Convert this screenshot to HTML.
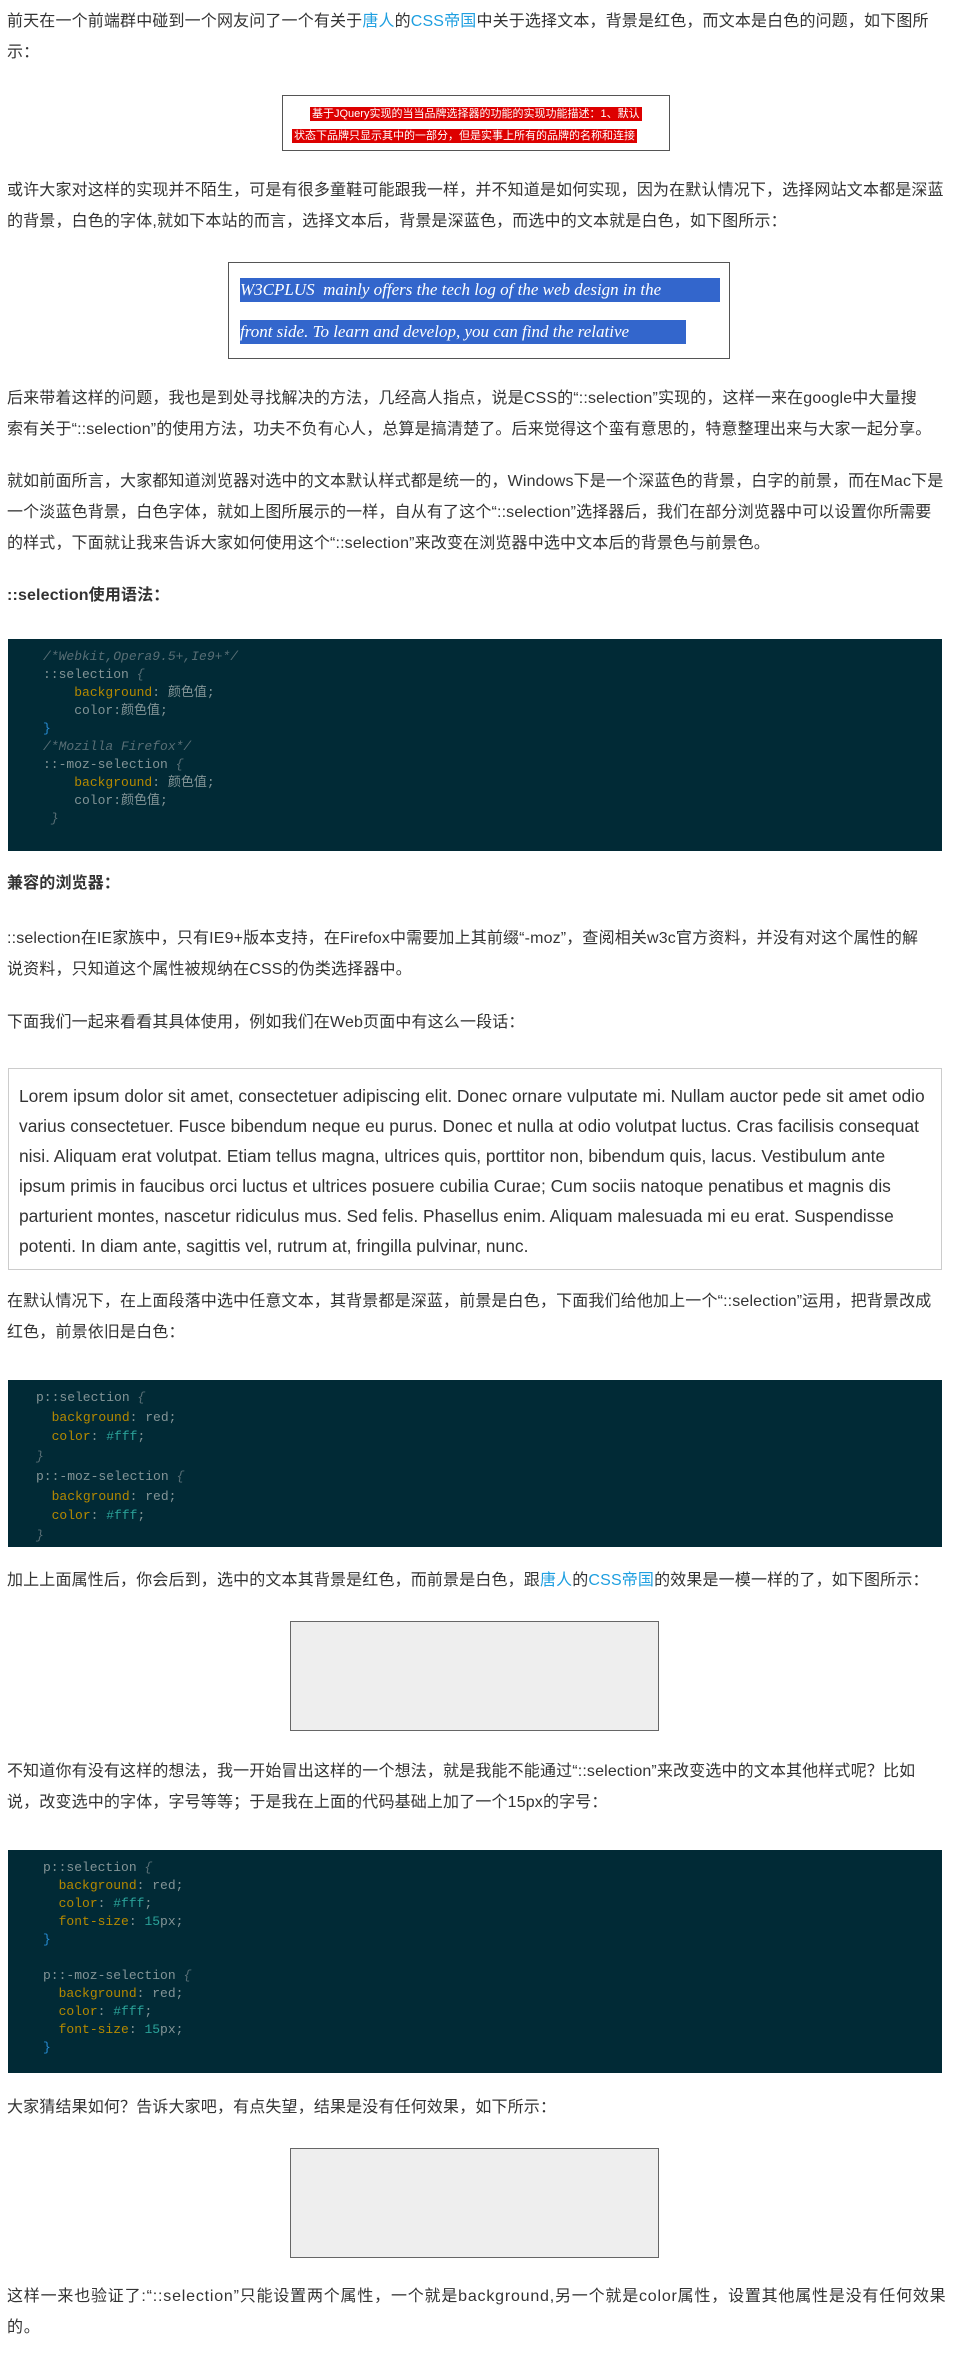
<!DOCTYPE html>
<html><head><meta charset="utf-8"><style>
html,body{margin:0;padding:0;background:#fff;width:954px;height:2364px;overflow:hidden}
body{position:relative;font-family:"Liberation Sans","Noto Sans CJK SC",sans-serif;color:#333;font-size:16px}
.p{position:absolute;left:7px;width:940px;line-height:31px;margin:0;letter-spacing:0.15px}
.p a{color:#1e9fe0;text-decoration:none}
.h{font-weight:bold}
.code{position:absolute;left:8px;width:934px;background:#012a36;font-family:"Liberation Mono","Noto Sans CJK SC",monospace;font-size:13px;line-height:18px;color:#839496;white-space:pre;box-sizing:border-box}
.c{color:#586e75;font-style:italic}.k{color:#b58900}.v{color:#2aa198}.b{color:#268bd2}
.box{position:absolute;border:1px solid #555;background:#fff;box-sizing:border-box}
.gray{position:absolute;left:290px;width:369px;background:#eee;border:1px solid #666;box-sizing:border-box}
</style></head><body>
<p class="p" style="top:6px">前天在一个前端群中碰到一个网友问了一个有关于<a>唐人</a>的<a>CSS帝国</a>中关于选择文本，背景是红色，而文本是白色的问题，如下图所示：</p>
<div class="box" style="left:282px;top:95px;width:388px;height:56px;font-size:11px;color:#fff;line-height:14px">
<div style="position:absolute;left:27px;top:11px;background:#d00;padding:0 2px;white-space:nowrap">基于JQuery实现的当当品牌选择器的功能的实现功能描述：1、默认</div>
<div style="position:absolute;left:9px;top:33px;background:#d00;padding:0 2px;white-space:nowrap">状态下品牌只显示其中的一部分，但是实事上所有的品牌的名称和连接</div>
</div>
<p class="p" style="top:175px">或许大家对这样的实现并不陌生，可是有很多童鞋可能跟我一样，并不知道是如何实现，因为在默认情况下，选择网站文本都是深蓝的背景，白色的字体,就如下本站的而言，选择文本后，背景是深蓝色，而选中的文本就是白色，如下图所示：</p>
<div class="box" style="left:228px;top:262px;width:502px;height:97px;font-family:'Liberation Serif',cursive;font-style:italic;color:#fff;font-size:17px">
<div style="position:absolute;left:11px;top:15px;width:480px;height:24px;background:#3366cc;line-height:24px;white-space:nowrap">W3CPLUS &nbsp;mainly offers the tech log of the web design in the</div>
<div style="position:absolute;left:11px;top:57px;width:446px;height:24px;background:#3366cc;line-height:24px;white-space:nowrap">front side. To learn and develop, you can find the relative</div>
</div>
<p class="p" style="top:383px">后来带着这样的问题，我也是到处寻找解决的方法，几经高人指点，说是CSS的“::selection”实现的，这样一来在google中大量搜<br>索有关于“::selection”的使用方法，功夫不负有心人，总算是搞清楚了。后来觉得这个蛮有意思的，特意整理出来与大家一起分享。</p>
<p class="p" style="top:466px">就如前面所言，大家都知道浏览器对选中的文本默认样式都是统一的，Windows下是一个深蓝色的背景，白字的前景，而在Mac下是一个淡蓝色背景，白色字体，就如上图所展示的一样，自从有了这个“::selection”选择器后，我们在部分浏览器中可以设置你所需要<br>的样式，下面就让我来告诉大家如何使用这个“::selection”来改变在浏览器中选中文本后的背景色与前景色。</p>
<p class="p h" style="top:580px">::selection使用语法：</p>
<div class="code" style="top:639px;height:212px;padding:9px 0 0 35px"><span class="c">/*Webkit,Opera9.5+,Ie9+*/</span>
::selection <span class="c">{</span>
    <span class="k">background</span>: 颜色值;
    color:颜色值;
<span class="b">}</span>
<span class="c">/*Mozilla Firefox*/</span>
::-moz-selection <span class="c">{</span>
    <span class="k">background</span>: 颜色值;
    color:颜色值;
 <span class="c">}</span></div>
<p class="p h" style="top:868px">兼容的浏览器：</p>
<p class="p" style="top:923px">::selection在IE家族中，只有IE9+版本支持，在Firefox中需要加上其前缀“-moz”，查阅相关w3c官方资料，并没有对这个属性的解<br>说资料，只知道这个属性被规纳在CSS的伪类选择器中。</p>
<p class="p" style="top:1007px">下面我们一起来看看其具体使用，例如我们在Web页面中有这么一段话：</p>
<div style="position:absolute;left:8px;top:1068px;width:934px;height:202px;border:1px solid #ccc;box-sizing:border-box;padding:12px 4px 0 10px;font-size:17.4px;line-height:30px;color:#333;white-space:nowrap;overflow:hidden">Lorem ipsum dolor sit amet, consectetuer adipiscing elit. Donec ornare vulputate mi. Nullam auctor pede sit amet odio<br>varius consectetuer. Fusce bibendum neque eu purus. Donec et nulla at odio volutpat luctus. Cras facilisis consequat<br>nisi. Aliquam erat volutpat. Etiam tellus magna, ultrices quis, porttitor non, bibendum quis, lacus. Vestibulum ante<br>ipsum primis in faucibus orci luctus et ultrices posuere cubilia Curae; Cum sociis natoque penatibus et magnis dis<br>parturient montes, nascetur ridiculus mus. Sed felis. Phasellus enim. Aliquam malesuada mi eu erat. Suspendisse<br>potenti. In diam ante, sagittis vel, rutrum at, fringilla pulvinar, nunc.</div>
<p class="p" style="top:1286px">在默认情况下，在上面段落中选中任意文本，其背景都是深蓝，前景是白色，下面我们给他加上一个“::selection”运用，把背景改成<br>红色，前景依旧是白色：</p>
<div class="code" style="top:1380px;height:167px;padding:8px 0 0 28px;line-height:19.7px">p::selection <span class="c">{</span>
  <span class="k">background</span>: red;
  <span class="k">color</span>: <span class="v">#fff</span>;
<span class="c">}</span>
p::-moz-selection <span class="c">{</span>
  <span class="k">background</span>: red;
  <span class="k">color</span>: <span class="v">#fff</span>;
<span class="c">}</span></div>
<p class="p" style="top:1565px">加上上面属性后，你会后到，选中的文本其背景是红色，而前景是白色，跟<a>唐人</a>的<a>CSS帝国</a>的效果是一模一样的了，如下图所示：</p>
<div class="gray" style="top:1621px;height:110px"></div>
<p class="p" style="top:1756px">不知道你有没有这样的想法，我一开始冒出这样的一个想法，就是我能不能通过“::selection”来改变选中的文本其他样式呢？比如<br>说，改变选中的字体，字号等等；于是我在上面的代码基础上加了一个15px的字号：</p>
<div class="code" style="top:1850px;height:223px;padding:9px 0 0 35px">p::selection <span class="c">{</span>
  <span class="k">background</span>: red;
  <span class="k">color</span>: <span class="v">#fff</span>;
  <span class="k">font-size</span>: <span class="v">15</span>px;
<span class="b">}</span>

p::-moz-selection <span class="c">{</span>
  <span class="k">background</span>: red;
  <span class="k">color</span>: <span class="v">#fff</span>;
  <span class="k">font-size</span>: <span class="v">15</span>px;
<span class="b">}</span></div>
<p class="p" style="top:2092px">大家猜结果如何？告诉大家吧，有点失望，结果是没有任何效果，如下所示：</p>
<div class="gray" style="top:2148px;height:110px"></div>
<p class="p" style="top:2281px;letter-spacing:0.8px">这样一来也验证了:“::selection”只能设置两个属性，一个就是background,另一个就是color属性，设置其他属性是没有任何效果<br>的。</p>
</body></html>
